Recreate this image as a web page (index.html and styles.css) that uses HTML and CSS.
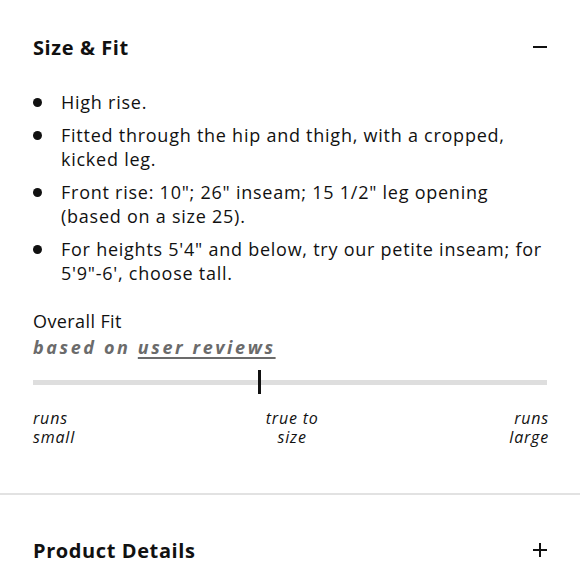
FILE: index.html
```html
<!DOCTYPE html>
<html>
<head>
<meta charset="utf-8">
<link rel="stylesheet" href="styles.css">
</head>
<body>
<section class="panel">
  <div class="head">
    <h2 class="title">Size &amp; Fit</h2>
    <span class="toggle minus"></span>
  </div>
  <ul class="bullets">
    <li>High rise.</li>
    <li>Fitted through the hip and thigh, with a cropped, kicked leg.</li>
    <li>Front rise: 10"; 26" inseam; 15 1/2" leg opening (based on a size 25).</li>
    <li>For heights 5'4" and below, try our petite inseam; for 5'9"-6', choose tall.</li>
  </ul>
  <div class="fit">
    <div class="fit-title">Overall Fit</div>
    <div class="fit-sub">based on <span class="link">user reviews</span></div>
    <div class="track"><span class="marker"></span></div>
    <div class="labels">
      <div class="lab left"><span>runs</span><span>small</span></div>
      <div class="lab mid"><span>true to</span><span>size</span></div>
      <div class="lab right"><span>runs</span><span>large</span></div>
    </div>
  </div>
</section>
<section class="panel2">
  <div class="head">
    <h2 class="title">Product Details</h2>
    <span class="toggle plus"></span>
  </div>
</section>
</body>
</html>
```
FILE: styles.css
```css
* { box-sizing: border-box; }
body {
  margin: 0;
  font-family: "Open Sans", "Noto Sans", sans-serif;
  color: #111;
  background: #fff;
}
.panel {
  padding: 33px 33px 0 33px;
  border-bottom: 2px solid #e2e2e2;
  height: 495px;
}
.head {
  display: flex;
  justify-content: space-between;
  align-items: center;
  height: 28px;
}
.title {
  margin: 0;
  font-size: 20px;
  font-weight: 700;
  letter-spacing: 0.6px;
}
.toggle {
  position: relative;
  width: 14px;
  height: 14px;
}
.toggle::before {
  content: "";
  position: absolute;
  left: 0; right: 0; top: 6px;
  height: 2px;
  background: #111;
}
.plus::after {
  content: "";
  position: absolute;
  top: 0; bottom: 0; left: 6px;
  width: 2px;
  background: #111;
}
.bullets {
  list-style: none;
  margin: 29px 0 0 0;
  padding: 0 3px 0 0;
}
.bullets li {
  position: relative;
  padding-left: 28px;
  font-size: 18px;
  line-height: 24px;
  margin-bottom: 9px;
  letter-spacing: 0.75px;
}
.bullets li::before {
  content: "";
  position: absolute;
  left: 0;
  top: 8px;
  width: 9px;
  height: 9px;
  border-radius: 50%;
  background: #111;
}
.fit { margin-top: 24px; }
.fit-title {
  font-size: 18px;
  line-height: 24px;
  letter-spacing: 0.4px;
}
.fit-sub {
  font-size: 18px;
  line-height: 28px;
  font-style: italic;
  font-weight: 700;
  color: #6b6b6b;
  letter-spacing: 2.6px;
}
.link { text-decoration: underline; text-underline-offset: 3px; text-decoration-thickness: 2px; }
.track {
  position: relative;
  margin-top: 19px;
  height: 5px;
  background: #dedede;
  width: 514px;
}
.marker {
  position: absolute;
  left: 225px;
  top: -10px;
  width: 3px;
  height: 24px;
  background: #111;
}
.labels {
  display: flex;
  justify-content: space-between;
  margin-top: 24px;
  width: 516px;
}
.lab {
  display: flex;
  flex-direction: column;
  font-size: 16px;
  line-height: 19px;
  font-style: italic;
  letter-spacing: 0.8px;
}
.mid { align-items: center; }
.right { align-items: flex-end; }
.panel2 { padding: 41px 33px 0 33px; }
```
